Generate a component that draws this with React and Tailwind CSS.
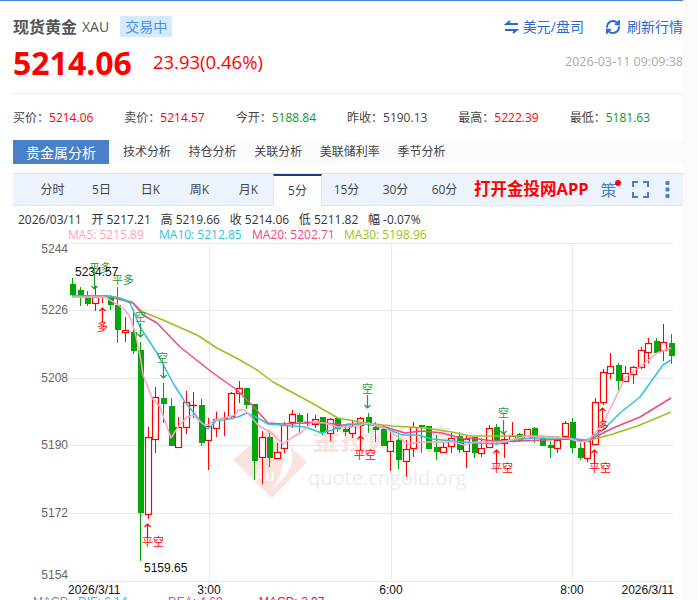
import { RefreshCw } from "lucide-react";

const font = { fontFamily: '"Open Sans", "Noto Sans CJK SC", sans-serif' };
const RED = "#ff0000";
const GREEN = "#00a60a";
const MARK_GREEN = "#1f9a33";

const stats = [
  ["买价", "5214.06", "text-[#ff0000]"],
  ["卖价", "5214.57", "text-[#ff0000]"],
  ["今开", "5188.84", "text-[#0a9a14]"],
  ["昨收", "5190.13", "text-[#444]"],
  ["最高", "5222.39", "text-[#ff0000]"],
  ["最低", "5181.63", "text-[#0a9a14]"],
];

const periods = ["分时", "5日", "日K", "周K", "月K", "5分", "15分", "30分", "60分"];
const subTabs = ["技术分析", "持仓分析", "关联分析", "美联储利率", "季节分析"];

// [body top, body bottom, wick top, wick bottom, red?]
const candles = [
  [284, 295, 278, 297, 0], [290, 296, 287, 306, 0], [295, 304, 291, 306, 0], [297, 303, 286, 311, 1],
  [296, 297, 295, 303, 1], [297, 305, 295, 310, 0], [305, 330, 287, 343, 0], [330, 332, 317, 342, 1],
  [332, 351, 309, 354, 0], [350, 513, 342, 561, 0], [437, 514, 427, 519, 1], [397, 439, 387, 453, 1],
  [398, 404, 383, 423, 0], [406, 446, 398, 446, 0], [427, 447, 417, 447, 1], [402, 427, 391, 434, 1],
  [405, 405, 392, 418, 1], [405, 443, 399, 446, 0], [426, 440, 418, 470, 1], [419, 428, 412, 437, 1],
  [418, 418, 412, 436, 1], [393, 416, 392, 418, 1], [388, 393, 381, 403, 1], [388, 405, 388, 409, 0],
  [404, 461, 404, 480, 0], [437, 457, 431, 484, 1], [437, 458, 433, 467, 0], [452, 458, 443, 458, 1],
  [425, 448, 422, 453, 1], [414, 422, 410, 428, 1], [415, 422, 413, 433, 0], [422, 423, 413, 427, 1],
  [419, 424, 415, 428, 1], [417, 433, 417, 435, 0], [419, 433, 418, 441, 1], [418, 429, 417, 432, 0],
  [429, 432, 425, 436, 0], [426, 433, 420, 438, 1], [418, 425, 417, 437, 1], [417, 425, 413, 433, 0],
  [427, 430, 422, 442, 0], [429, 446, 425, 446, 0], [441, 451, 432, 471, 1], [440, 460, 435, 469, 0],
  [449, 461, 440, 477, 1], [427, 448, 422, 457, 1], [425, 427, 425, 453, 0], [426, 449, 426, 449, 0],
  [447, 452, 435, 460, 0], [447, 452, 442, 453, 1], [438, 446, 433, 453, 1], [436, 450, 432, 453, 0],
  [439, 451, 435, 468, 1], [437, 453, 437, 458, 0], [448, 453, 438, 457, 1], [428, 447, 425, 447, 1],
  [427, 442, 424, 445, 0], [439, 443, 433, 458, 1], [436, 441, 422, 441, 1], [434, 441, 433, 442, 0],
  [429, 438, 429, 438, 1], [428, 438, 427, 443, 0], [438, 446, 436, 446, 0], [445, 448, 441, 458, 0],
  [440, 448, 436, 453, 1], [423, 436, 421, 437, 1], [422, 448, 418, 453, 0], [448, 458, 443, 460, 0],
  [441, 458, 441, 462, 1], [402, 444, 398, 445, 1], [372, 402, 369, 405, 1], [366, 373, 353, 379, 1],
  [365, 381, 363, 391, 0], [373, 381, 366, 381, 1], [367, 374, 366, 384, 1], [350, 367, 347, 369, 1],
  [343, 352, 338, 363, 1], [341, 353, 338, 353, 0], [342, 350, 324, 361, 1], [343, 356, 334, 364, 0],
];

const ma5 = "72,297 92,297 105,297 115,303 125,310 130,317 135,332 140,355 143,375 152,398 160,407 171,438 178,427 187,417 193,415 203,424 208,425 215,420 225,418 235,415 238,410 245,410 258,425 270,432 283,444 293,437 302,432 312,422 325,423 338,427 352,427 368,423 385,428 398,437 408,444 422,442 438,442 452,442 465,445 475,442 503,442 527,436 543,437 567,438 580,442 588,441 602,425 613,403 625,378 640,367 657,353 671,348";
const ma10 = "72,296 108,296 120,298 130,303 133,310 140,327 157,353 173,383 185,402 202,423 208,429 217,420 225,420 238,417 247,413 258,418 268,424 280,425 305,427 322,433 332,430 348,424 368,424 385,428 402,435 418,435 432,439 452,441 475,443 497,444 513,440 533,438 567,438 587,440 603,430 620,413 640,397 663,365 671,360";
const ma20 = "72,296 108,296 122,300 133,303 143,315 157,323 180,347 213,373 237,390 252,405 268,423 282,424 305,423 325,423 342,425 365,424 385,427 405,433 422,431 442,433 465,439 470,438 493,441 520,441 567,439 587,441 613,428 640,417 671,398";
const ma30 = "72,297 115,297 132,302 143,312 163,320 197,335 217,348 240,360 257,370 273,382 310,402 338,418 365,423 392,426 425,428 452,432 470,436 503,436 540,436 567,438 587,441 613,434 640,425 671,412";

const gridY = [243, 310, 378, 445, 513, 581];
const gridX = [209, 391, 572];
const priceLabels = [[5244, 253], [5226, 314], [5208, 382], [5190, 449], [5172, 517], [5154, 579]];

// label, text x, text baseline, arrow x, arrow from y, arrow to y, colour
const marks = [
  ["平多", 89, 272, 94, 274, 289, MARK_GREEN],
  ["平多", 112, 284, 0, 0, 0, MARK_GREEN],
  ["多", 97, 331, 102, 322, 308, RED],
  ["空", 135, 321, 140, 323, 337, MARK_GREEN],
  ["空", 157, 362, 163, 364, 378, MARK_GREEN],
  ["平空", 142, 546, 147, 537, 524, RED],
  ["空", 362, 393, 367, 395, 408, MARK_GREEN],
  ["平空", 354, 459, 360, 450, 436, RED],
  ["空", 498, 417, 503, 420, 434, MARK_GREEN],
  ["平空", 491, 472, 496, 463, 450, RED],
  ["平空", 589, 472, 594, 463, 450, RED],
  ["多", 598, 430, 602, 422, 408, RED],
];

const Chart = () => {
  return (
    <svg className="block" width="683" height="358" viewBox="0 242 683 358">
      {/* watermark */}
      <polygon points="270,428 307,462 272,498 233,460" fill="#f9e3df" />
      <path d="M283 436 Q306 462 272 489 Q292 462 276 438 Z" fill="#ffffff" />
      <text x="255" y="481" fontSize="16" fill="#ffffff" fontFamily="Liberation Sans">Au</text>
      <text x="312" y="450" fontSize="28" fontWeight="700" fill="#f8e4e0" fontFamily="Noto Sans CJK SC">金投网行情</text>
      <text x="308" y="485" fontSize="20" fill="#ececec" fontFamily="Open Sans">quote.cngold.org</text>

      {gridY.map((y) => (
        <line key={y} x1="68" x2="673" y1={y + 0.5} y2={y + 0.5} stroke="#e9e9e9" />
      ))}
      {gridX.map((x) => (
        <line key={x} x1={x + 0.5} x2={x + 0.5} y1="243" y2="581" stroke="#e9e9e9" />
      ))}

      {priceLabels.map(([p, y]) => (
        <text key={p} x="68" y={y} textAnchor="end" fontSize="12" fill="#666" fontFamily="Liberation Sans">{p}</text>
      ))}

      {candles.map(([t, b, h, l, up], i) => {
        const x = Math.round(72 + i * 7.58);
        const color = up ? RED : GREEN;
        if (up) {
          return (
            <g key={i}>
              <line x1={x + 0.5} x2={x + 0.5} y1={h} y2={l} stroke={color} strokeWidth="1" />
              {b - t < 2 ? (
                <line x1={x - 3} x2={x + 4} y1={t + 0.5} y2={t + 0.5} stroke={color} strokeWidth="1.5" />
              ) : (
                <rect x={x - 2.5} y={t + 0.5} width="6" height={b - t} fill="#fff" stroke={color} strokeWidth="1.2" />
              )}
            </g>
          );
        }
        return (
          <g key={i}>
            <line x1={x + 0.5} x2={x + 0.5} y1={h} y2={l} stroke={color} strokeWidth="1" />
            <rect x={x - 2} y={t} width="6" height={b - t} fill={color} />
          </g>
        );
      })}

      <polyline points={ma30} fill="none" stroke="#9dbf24" strokeWidth="1.5" strokeLinejoin="round" />
      <polyline points={ma20} fill="none" stroke="#ee4a80" strokeWidth="1.5" strokeLinejoin="round" />
      <polyline points={ma10} fill="none" stroke="#2cc3e0" strokeWidth="1.5" strokeLinejoin="round" />
      <polyline points={ma5} fill="none" stroke="#ffa3c0" strokeWidth="1.5" strokeLinejoin="round" />

      {marks.map(([label, tx, ty, ax, y1, y2, color], i) => (
        <g key={i}>
          <text x={tx} y={ty} fontSize="11" fill={color} fontFamily="Noto Sans CJK SC">{label}</text>
          {ax > 0 && (
            <path
              d={`M${ax + 0.5} ${y1} L${ax + 0.5} ${y2} M${ax - 2.5} ${y2 + (y2 > y1 ? -3 : 3)} L${ax + 0.5} ${y2} L${ax + 3.5} ${y2 + (y2 > y1 ? -3 : 3)}`}
              fill="none"
              stroke={color}
              strokeWidth="1.2"
            />
          )}
        </g>
      ))}

      <g fontFamily="Liberation Sans" fontSize="12" fill="#111">
        <text x="75" y="276">5234.57</text>
        <text x="144" y="572">5159.65</text>
        <text x="68" y="594">2026/3/11</text>
        <text x="209" y="594" textAnchor="middle">3:00</text>
        <text x="391" y="594" textAnchor="middle">6:00</text>
        <text x="572" y="594" textAnchor="middle">8:00</text>
        <text x="674" y="594" textAnchor="end">2026/3/11</text>
      </g>
      <g fontFamily="Liberation Sans" fontSize="12">
        <text x="33" y="606" fill="#888">MACD</text>
        <text x="78" y="606" fill="#1cc4ec">DIF: 6.14</text>
        <text x="168" y="606" fill="#e040d0">DEA: 4.69</text>
        <text x="259" y="606" fill="#e0202a">MACD: 2.97</text>
      </g>
    </svg>
  );
};

export default function App() {
  return (
    <div className="flex h-[600px] w-full overflow-hidden bg-[#fafafa]" style={font}>
      <div className="w-[683px] shrink-0 bg-white">
        <div className="h-[1px] bg-[#4a80d0]" />

        <div className="pl-[13px]">
          <div className="flex h-[36px] items-center pt-[15px]">
            <span className="text-[16px] font-bold text-[#555]">现货黄金</span>
            <span className="ml-[5px] text-[14px] text-[#555]">XAU</span>
            <span className="ml-[11px] flex h-[21px] w-[52px] items-center justify-center bg-[#d6eaff] text-[14px] text-[#4a90e2]">
              交易中
            </span>
            <div className="ml-auto flex items-center text-[14px] text-[#2a6ad0]">
              <svg width="15" height="14" viewBox="0 0 15 14" fill="none" stroke="#2a6ad0" strokeWidth="2">
                <path d="M14 4H2.5L6 1" />
                <path d="M1 10h11.5L9 13" />
              </svg>
              <span className="ml-[4px]">美元/盘司</span>
              <RefreshCw size={16} strokeWidth={3} className="ml-[21px]" />
              <span className="ml-[6px]">刷新行情</span>
            </div>
          </div>

          <div className="flex h-[41px] items-center pt-[10px]">
            <span className="text-[32px] font-bold leading-none text-[#ff0000]">5214.06</span>
            <span className="ml-[21px] text-[18.5px] leading-none text-[#ff0000]">23.93(0.46%)</span>
            <span className="ml-auto text-[12.5px] text-[#aaa]">2026-03-11 09:09:38</span>
          </div>

          <div className="mt-[15px] border-t border-[#eee] pt-[15px]">
            <div className="grid grid-cols-6 pr-[2px] text-[12px] leading-[17px] text-[#444]">
              {stats.map(([label, value, color]) => (
                <div key={label}>
                  {label}：<span className={color}>{value}</span>
                </div>
              ))}
            </div>
          </div>

          <div className="mt-[14px] flex h-[24px] items-center bg-[#fafafa] text-[12px] text-[#444]">
            <div className="flex h-full w-[96px] items-center justify-center bg-[#4a80c8] text-[14px] text-white">
              贵金属分析
            </div>
            <div className="ml-[14px] flex gap-[17.6px]">
              {subTabs.map((t) => (
                <span key={t}>{t}</span>
              ))}
            </div>
          </div>

          <div className="mt-[9px] flex h-[33px] items-stretch border-y border-[#dfe6f3] bg-[#edf3fd] pl-[15px] text-[12px] text-[#444]">
            {periods.map((p) =>
              p === "5分" ? (
                <div key={p} className="-mb-px flex w-[49px] items-center justify-center border-x border-t-2 border-x-[#dfe6f3] border-t-[#1a3a8a] bg-white">
                  {p}
                </div>
              ) : (
                <div key={p} className="flex w-[49px] items-center justify-center">
                  {p}
                </div>
              )
            )}
            <span className="ml-[5px] self-center text-[16.5px] font-bold text-[#ff0000]">打开金投网APP</span>
            <div className="relative ml-[12px] self-center text-[16px] text-[#4a80c8]">
              策
              <span className="absolute right-[-4px] top-[2px] h-[6px] w-[6px] rounded-full bg-[#ff0000]" />
            </div>
            <svg className="ml-[15px] self-center" width="17" height="17" viewBox="0 0 17 17" fill="none" stroke="#4a80c8" strokeWidth="2">
              <path d="M1 6V1h5M11 1h5v5M16 11v5h-5M6 16H1v-5" />
            </svg>
            <svg className="ml-[16px] self-center" width="5" height="17" viewBox="0 0 5 17" fill="#4a80c8">
              <rect x="0.5" y="0" width="4" height="4" rx="1" />
              <rect x="0.5" y="6.5" width="4" height="4" rx="1" />
              <rect x="0.5" y="13" width="4" height="4" rx="1" />
            </svg>
          </div>
        </div>

        <div className="mt-[6px] flex gap-[9.7px] whitespace-pre pl-[18px] text-[12px] leading-[16px] text-[#333]">
          <span>2026/03/11</span>
          <span>开 5217.21</span>
          <span>高 5219.66</span>
          <span>收 5214.06</span>
          <span>低 5211.82</span>
          <span>幅 -0.07%</span>
        </div>
        <div className="flex whitespace-pre pl-[68px] text-[12px] leading-[14px]">
          <span className="w-[91px] text-[#ffa3c0]">MA5: 5215.89</span>
          <span className="w-[93px] text-[#2cc3e0]">MA10: 5212.85</span>
          <span className="w-[92px] text-[#ee4a80]">MA20: 5202.71</span>
          <span className="text-[#9dbf24]">MA30: 5198.96</span>
        </div>

        <Chart />
      </div>
      <div className="flex-1" />
    </div>
  );
}
